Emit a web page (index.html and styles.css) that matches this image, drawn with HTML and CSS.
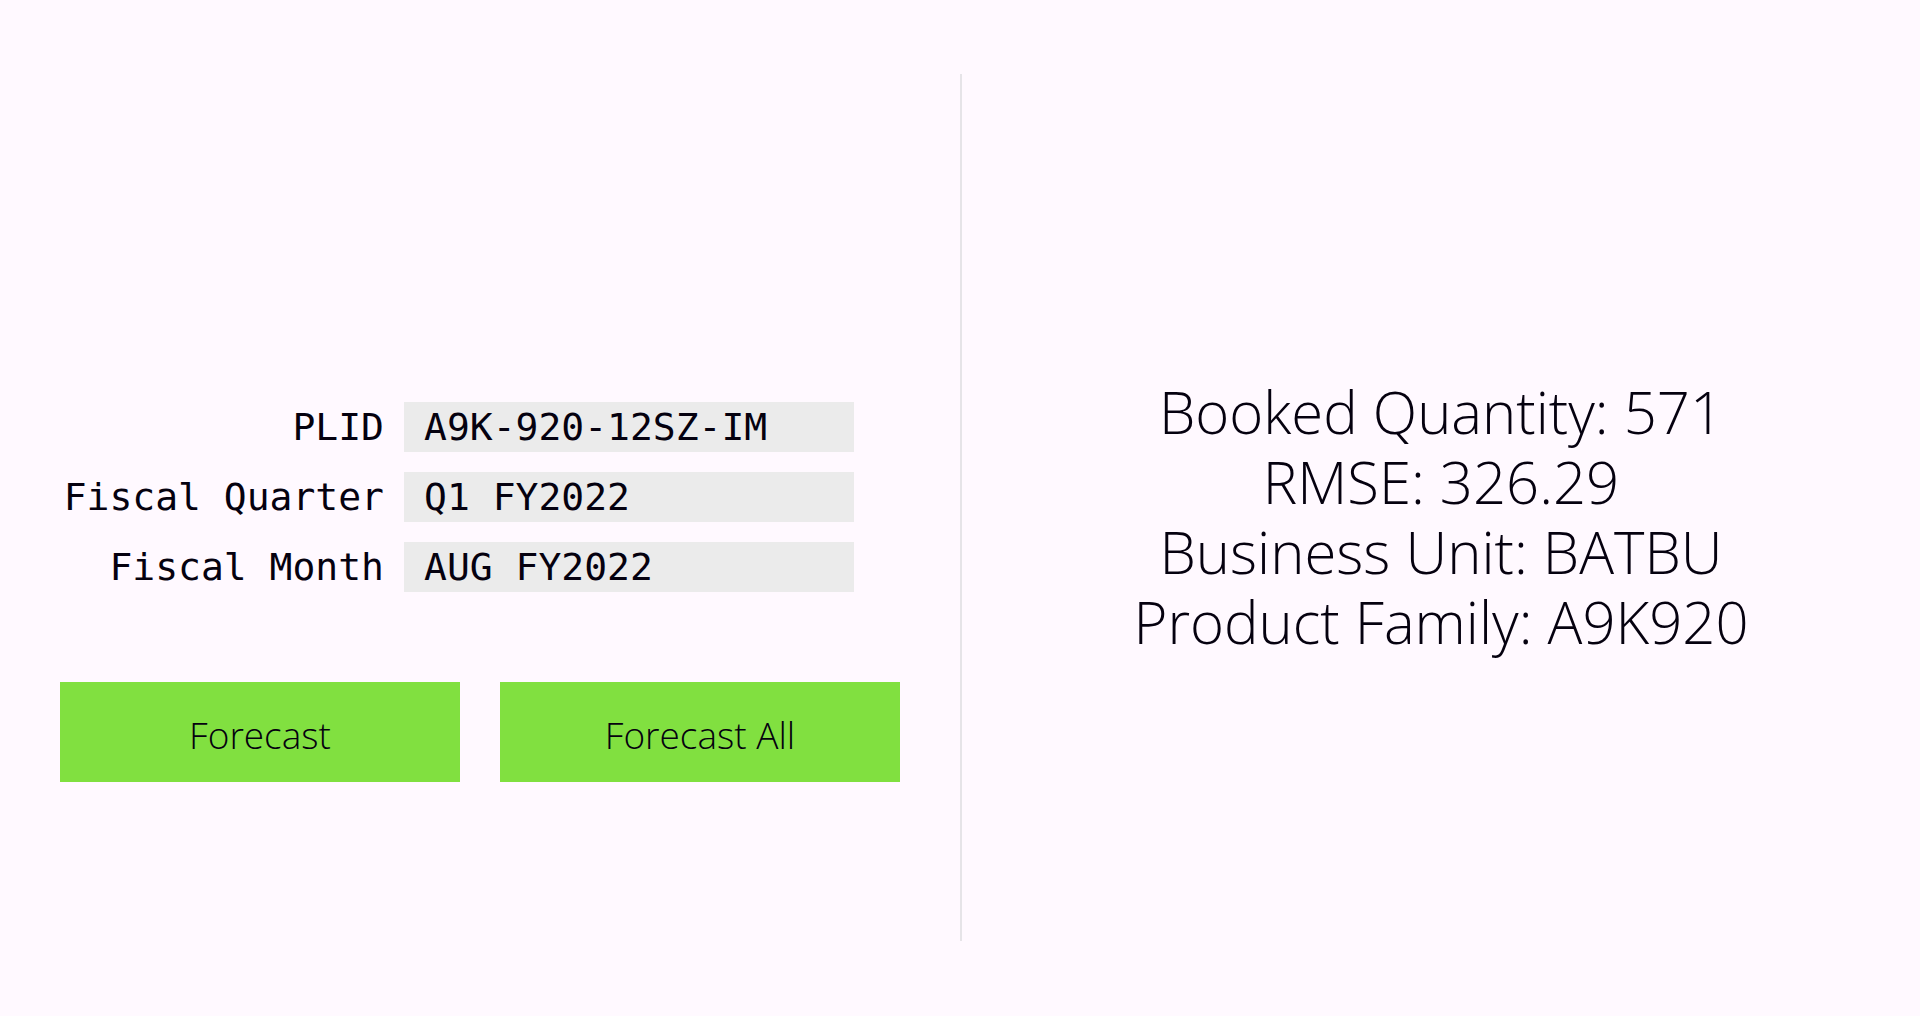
FILE: index.html
```html
<!DOCTYPE html>
<html lang="en">
<head>
  <meta charset="utf-8">
  <meta name="viewport" content="width=device-width, initial-scale=1">
  <title>Forecast</title>
  <link rel="stylesheet" href="styles.css">
</head>
<body>
  <main class="layout">
    <form class="panel">
      <div class="fields">
        <label class="label" for="plid">PLID</label>
        <input class="input" id="plid" type="text" value="A9K-920-12SZ-IM">
        <label class="label" for="quarter">Fiscal Quarter</label>
        <input class="input" id="quarter" type="text" value="Q1 FY2022">
        <label class="label" for="month">Fiscal Month</label>
        <input class="input" id="month" type="text" value="AUG FY2022">
      </div>
      <div class="actions">
        <button class="button" type="button">Forecast</button>
        <button class="button" type="button">Forecast All</button>
      </div>
    </form>
    <section class="results">
      <p class="result">Booked Quantity: 571</p>
      <p class="result">RMSE: 326.29</p>
      <p class="result">Business Unit: BATBU</p>
      <p class="result">Product Family: A9K920</p>
    </section>
  </main>
</body>
</html>
```
FILE: styles.css
```css
* {
  box-sizing: border-box;
}

body {
  margin: 0;
  background: #fff9ff;
  color: #05010f;
  font-family: "Segoe UI Light", "Open Sans", "Noto Sans", sans-serif;
  font-weight: 300;
}

.layout {
  display: grid;
  grid-template-columns: 1fr 1fr;
  min-height: 100vh;
}

.panel {
  display: flex;
  flex-direction: column;
  justify-content: center;
  gap: 90px;
  padding: 168px 60px 0;
}

.fields {
  display: grid;
  grid-template-columns: 324px minmax(0, 450px);
  gap: 20px;
}

.label,
.input {
  font-family: "DejaVu Sans Mono", monospace;
  font-size: 38px;
  font-weight: 400;
  line-height: 50px;
}

.label {
  text-align: right;
  white-space: nowrap;
}

.input {
  width: 100%;
  height: 50px;
  padding: 0 20px;
  border: 0;
  border-radius: 0;
  background: #ebebeb;
  color: inherit;
}

.actions {
  display: grid;
  grid-template-columns: 1fr 1fr;
  gap: 40px;
}

.button {
  height: 100px;
  padding: 4px 0 0;
  border: 0;
  background: #81e040;
  color: #05010f;
  font-family: inherit;
  font-size: 37px;
  font-weight: 300;
  cursor: pointer;
}

.results {
  display: flex;
  flex-direction: column;
  justify-content: center;
  margin: 74px 0 75px;
  padding-top: 18px;
  border-left: 2px solid #e6e4e8;
  text-align: center;
}

.result {
  margin: 0;
  font-size: 58px;
  line-height: 70px;
}
```
